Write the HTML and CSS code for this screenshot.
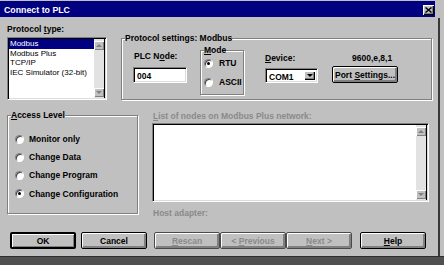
FILE: index.html
```html
<!DOCTYPE html>
<html lang="en">
<head>
  <meta charset="UTF-8" />
  <title>Connect to PLC</title>
  <link rel="stylesheet" href="styles.css">
</head>
<body>
  <div class="screen">
    <div class="window">
      <div class="titlebar">
        <span class="title">Connect to PLC</span>
        <span class="close">
          <svg width="7" height="6" viewBox="0 0 7 6"><path d="M0.5 0.5 L6.5 5.5 M6.5 0.5 L0.5 5.5" stroke="#000" stroke-width="1.4" fill="none"/></svg>
        </span>
      </div>

      <div class="content">
        <div class="row row-top">
          <div class="proto">
            <div class="label">Protocol <u>t</u>ype:</div>
            <div class="listbox proto-list">
              <ul class="items">
                <li class="selected">Modbus</li>
                <li>Modbus Plus</li>
                <li>TCP/IP</li>
                <li>IEC Simulator (32-bit)</li>
              </ul>
              <div class="scrollbar">
                <span class="arrow up"></span>
                <span class="arrow down"></span>
              </div>
            </div>
          </div>

          <fieldset class="group settings">
            <legend>Protocol settings: Modbus</legend>
            <div class="settings-body">
              <div class="node">
                <div class="label">PLC N<u>o</u>de:</div>
                <div class="textbox">004</div>
              </div>
              <fieldset class="group mode">
                <legend><u>M</u>ode</legend>
                <div class="radios">
                  <div class="radio"><span class="dot checked"></span><span>RTU</span></div>
                  <div class="radio"><span class="dot"></span><span>ASCII</span></div>
                </div>
              </fieldset>
              <div class="device">
                <div class="label"><u>D</u>evice:</div>
                <div class="combo">
                  <span class="combo-text">COM1</span>
                  <span class="combo-btn"><span class="tri-down"></span></span>
                </div>
              </div>
              <div class="port">
                <div class="label baud">9600,e,8,1</div>
                <div class="btn port-btn"><span>Port <u>S</u>ettings...</span></div>
              </div>
            </div>
          </fieldset>
        </div>

        <div class="row row-mid">
          <fieldset class="group access">
            <legend><u>A</u>ccess Level</legend>
            <div class="access-body">
              <div class="radio"><span class="dot"></span><span>Monitor only</span></div>
              <div class="radio"><span class="dot"></span><span>Change Data</span></div>
              <div class="radio"><span class="dot"></span><span>Change Program</span></div>
              <div class="radio"><span class="dot checked"></span><span>Change Configuration</span></div>
            </div>
          </fieldset>

          <div class="nodes">
            <div class="label disabled"><u>L</u>ist of nodes on Modbus Plus network:</div>
            <div class="listbox node-list">
              <div class="items"></div>
              <div class="scrollbar">
                <span class="arrow up"></span>
                <span class="arrow down"></span>
              </div>
            </div>
            <div class="label disabled host">Host adapter:</div>
          </div>
        </div>

        <div class="row buttons">
          <div class="btn default"><span>OK</span></div>
          <div class="btn cancel"><span>Cancel</span></div>
          <div class="btn disabled rescan"><span><u>R</u>escan</span></div>
          <div class="btn disabled"><span>&lt; <u>P</u>revious</span></div>
          <div class="btn disabled"><span><u>N</u>ext &gt;</span></div>
          <div class="btn help"><span><u>H</u>elp</span></div>
        </div>
      </div>
    </div>
    <div class="frame-edge"></div>
  </div>
</body>
</html>
```

FILE: styles.css
```css
* {
  box-sizing: border-box;
}

body {
  margin: 0;
  background-color: #505050;
  font-family: "Liberation Sans", Arial, sans-serif;
  font-size: 8.5px;
  font-weight: bold;
  line-height: 10px;
  color: #000;
}

u {
  text-decoration-thickness: 1px;
  text-underline-offset: 1px;
}

.screen {
  display: flex;
  width: 444px;
  height: 257px;
  background-color: #c0c0c0;
  border-bottom: 1px solid #2e2e2e;
}

.window {
  width: 438px;
  padding-top: 1px;
  background-color: #c0c0c0;
}

.frame-edge {
  width: 2px;
  margin-top: 18px;
  background-color: #383838;
}

/* title bar */
.titlebar {
  display: flex;
  justify-content: space-between;
  align-items: flex-start;
  width: 435px;
  height: 16px;
  padding: 4px 1px 0 4px;
  background-color: #000080;
  color: #fff;
  font-size: 8.8px;
}

.close {
  display: flex;
  align-items: center;
  justify-content: center;
  width: 11px;
  height: 10px;
  background-color: #c0c0c0;
  box-shadow: inset 1px 1px 0 #fff, inset -1px -1px 0 #000, inset -2px -2px 0 #808080;
}

.content {
  padding: 7px 0 0 7px;
}

.row {
  display: flex;
  align-items: flex-start;
}

/* group boxes */
.group {
  margin: 0;
  padding: 0;
  min-inline-size: 0;
  border: 1px solid #808080;
  box-shadow: inset 1px 1px 0 #fff, 1px 1px 0 #fff;
}

.group legend {
  margin-left: 3px;
  padding: 0;
  background-color: #c0c0c0;
  line-height: 10px;
}

/* listboxes */
.listbox {
  display: flex;
  background-color: #fff;
  border: 1px solid;
  border-color: #808080 #fff #fff #808080;
  box-shadow: inset 1px 1px 0 #000, inset -1px -1px 0 #dcdcdc;
  padding: 1px;
}

.listbox .items {
  flex: 1;
  margin: 0;
  padding: 0;
  list-style: none;
}

.scrollbar {
  display: flex;
  flex-direction: column;
  justify-content: space-between;
  width: 11px;
  padding: 2px 0 1px 0;
  background-color: #e2e2e2;
  border-right: 1px solid #000;
}

.arrow {
  display: flex;
  align-items: center;
  justify-content: center;
  height: 9px;
  background-color: #c0c0c0;
  box-shadow: inset 1px 1px 0 #fff, inset -1px -1px 0 #808080;
}

.arrow::after {
  content: "";
  border-left: 3px solid transparent;
  border-right: 3px solid transparent;
}

.arrow.up::after {
  border-bottom: 3px solid #808080;
}

.arrow.down::after {
  border-top: 3px solid #808080;
}

/* protocol type */
.proto {
  width: 100px;
}

.proto-list {
  height: 63px;
  margin-top: 3px;
}

.proto-list .items {
  font-weight: normal;
  font-size: 8px;
  line-height: 9.6px;
}

.proto-list li {
  padding-left: 1px;
}

.proto-list li.selected {
  background-color: #000080;
  color: #fff;
}

/* protocol settings */
.settings {
  width: 311px;
  height: 67px;
  margin: 9px 0 0 14px;
}

.settings-body {
  display: flex;
  align-items: flex-start;
  padding-left: 11px;
}

.node {
  width: 54px;
  margin-top: 8px;
}

.node .label {
  padding-left: 1px;
}

.textbox {
  height: 16px;
  margin-top: 6px;
  padding: 3px 0 0 3px;
  background-color: #fff;
  border: 1px solid;
  border-color: #808080 #fff #fff #808080;
  box-shadow: inset 1px 1px 0 #000, inset -1px -1px 0 #dcdcdc;
}

.mode {
  width: 44px;
  height: 50px;
  margin: 2px 0 0 13px;
}

.radios {
  padding: 2px 0 0 3px;
}

.radios .radio + .radio {
  margin-top: 7px;
}

.radio {
  display: flex;
  align-items: center;
  height: 12px;
  white-space: nowrap;
}

.dot {
  display: flex;
  align-items: center;
  justify-content: center;
  width: 9px;
  height: 9px;
  margin-right: 6px;
  border-radius: 50%;
  background-color: #fff;
  border: 1px solid;
  border-color: #808080 #fff #fff #808080;
  box-shadow: inset 1px 1px 0 #404040;
}

.dot.checked::after {
  content: "";
  width: 3px;
  height: 3px;
  border-radius: 50%;
  background-color: #000;
}

.device {
  width: 53px;
  margin: 10px 0 0 21px;
}

.combo {
  display: flex;
  align-items: stretch;
  height: 15px;
  margin-top: 5px;
  padding: 2px;
  background-color: #fff;
  border: 1px solid;
  border-color: #808080 #fff #fff #808080;
  box-shadow: inset 1px 1px 0 #000, inset -1px -1px 0 #dcdcdc;
}

.combo-text {
  flex: 1;
  padding: 1px 0 0 1px;
}

.combo-btn {
  display: flex;
  align-items: center;
  justify-content: center;
  width: 11px;
  background-color: #c0c0c0;
  box-shadow: inset 1px 1px 0 #fff, inset -1px -1px 0 #000, inset -2px -2px 0 #808080;
}

.tri-down {
  border-left: 3px solid transparent;
  border-right: 3px solid transparent;
  border-top: 3px solid #000;
}

.port {
  width: 85px;
  margin: 10px 0 0 14px;
}

.baud {
  padding-left: 20px;
}

.port-btn {
  height: 17px;
  margin-top: 3px;
}

/* buttons */
.btn {
  display: flex;
  align-items: center;
  justify-content: center;
  width: 66px;
  height: 17px;
  background-color: #c0c0c0;
  border: 1px solid #000;
  border-radius: 2px;
  box-shadow: inset 1px 1px 0 #fff, inset -2px -2px 0 #808080;
  white-space: nowrap;
}

.btn.default {
  border-width: 2px;
  box-shadow: inset 1px 1px 0 #fff, inset -1px -1px 0 #808080;
}

.btn.disabled {
  color: #8a8a8a;
  border-color: #4a4a4a;
}

.disabled {
  color: #8a8a8a;
}

/* access level */
.row-mid {
  margin-top: 10px;
}

.access {
  width: 131px;
  height: 104px;
}

.access-body {
  padding: 13px 0 0 7px;
}

.access-body .radio + .radio {
  margin-top: 6.2px;
}

.access .dot {
  margin-right: 5px;
}

/* nodes list */
.nodes {
  width: 277px;
  margin: 1px 0 0 14px;
}

.nodes > .label {
  padding-left: 1px;
}

.node-list {
  height: 79px;
  margin-top: 2px;
  padding-right: 1px;
}

.host {
  margin-top: 6px;
  padding-left: 10px;
}

.buttons {
  margin: 14px 0 0 3px;
}

.cancel {
  margin-left: 5px;
}

.rescan {
  margin-left: 7px;
}

.help {
  margin-left: 8px;
}
```
